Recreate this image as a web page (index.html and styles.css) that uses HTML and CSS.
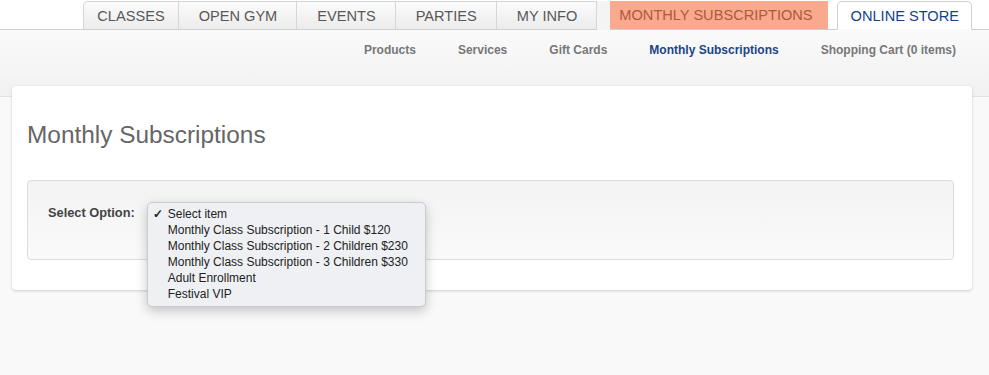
FILE: index.html
```html
<!DOCTYPE html>
<html>
<head>
<meta charset="utf-8">
<link rel="stylesheet" href="styles.css">
</head>
<body>
<header class="header">
  <nav class="tabs">
    <a class="tab tab-first">CLASSES</a>
    <a class="tab">OPEN GYM</a>
    <a class="tab">EVENTS</a>
    <a class="tab">PARTIES</a>
    <a class="tab tab-last">MY INFO</a>
    <a class="tab tab-promo">MONTHLY SUBSCRIPTIONS</a>
    <a class="tab tab-active">ONLINE STORE</a>
  </nav>
  <nav class="subnav">
    <a class="subnav-item">Products</a>
    <a class="subnav-item">Services</a>
    <a class="subnav-item">Gift Cards</a>
    <a class="subnav-item subnav-active">Monthly Subscriptions</a>
    <a class="subnav-item">Shopping Cart (0 items)</a>
  </nav>
</header>
<main class="main">
  <section class="card">
    <h1 class="title">Monthly Subscriptions</h1>
    <div class="well">
      <label class="label">Select Option:</label>
      <div class="select">
        <ul class="menu">
          <li class="menu-item"><span class="check">✓</span>Select item</li>
          <li class="menu-item">Monthly Class Subscription - 1 Child $120</li>
          <li class="menu-item">Monthly Class Subscription - 2 Children $230</li>
          <li class="menu-item">Monthly Class Subscription - 3 Children $330</li>
          <li class="menu-item">Adult Enrollment</li>
          <li class="menu-item">Festival VIP</li>
        </ul>
      </div>
    </div>
  </section>
</main>
</body>
</html>
```

FILE: styles.css
```css
* { box-sizing: border-box; }
html, body { margin: 0; padding: 0; }
body {
  background: #f9f9f9;
  font-family: "Liberation Sans", Arial, Helvetica, sans-serif;
  width: 989px;
  height: 375px;
  overflow: hidden;
}
.header {
  height: 97px;
  background: linear-gradient(#fafafa 30px, #f1f1f1 96px);
  border-bottom: 1px solid #e2e2e2;
}
.tabs {
  display: flex;
  justify-content: flex-end;
  align-items: flex-end;
  height: 30px;
  padding: 1px 17px 0 0;
  background: #fff;
  border-bottom: 1px solid #cfcfcf;
}
.tab {
  display: flex;
  align-items: center;
  height: 29px;
  margin-bottom: -1px;
  padding: 0 19px 0 20px;
  font-size: 14.6px;
  color: #585858;
  background: linear-gradient(#fbfbfb, #ececec);
  border: 1px solid #d6d6d6;
  border-left: none;
  border-bottom: 1px solid #cfcfcf;
}
.tab-first {
  padding: 0 13px 0 13px;
  border-left: 1px solid #d6d6d6;
  border-top-left-radius: 5px;
}
.tab-last {
  border-right: 1px solid #d6d6d6;
  box-shadow: 13px 0 0 #f4f4f4;
  margin-right: 13px;
}
.tab-promo {
  background: #f9a98e;
  border: none;
  color: #b0583e;
  padding: 0 15px 0 9px;
  height: 29px;
  border-bottom: 1px solid #cfcfcf;
}
.tab-active {
  margin-left: 9px;
  background: #fff;
  color: #12438a;
  border: 1px solid #d0d0d0;
  border-bottom: 1px solid #fafafa;
  border-radius: 5px 5px 0 0;
  padding: 0 12px 0 13px;
}
.subnav {
  display: flex;
  justify-content: flex-end;
  gap: 42px;
  padding: 13px 33px 0 0;
}
.subnav-item {
  font-size: 12px;
  font-weight: bold;
  color: #777;
}
.subnav-active { color: #1b4586; }
.main {
  margin-top: -11px;
  padding: 0 17px 0 12px;
}
.card {
  background: #fff;
  border-radius: 4px;
  box-shadow: 0 1px 3px rgba(0,0,0,0.18);
  height: 204px;
  padding: 35px 18px 0 15px;
}
.title {
  margin: 0 0 31px 0;
  font-size: 24.4px;
  font-weight: normal;
  color: #666;
  line-height: 28px;
}
.well {
  display: flex;
  align-items: flex-start;
  height: 80px;
  border: 1px solid #dcdcdc;
  border-radius: 4px;
  background: linear-gradient(#f3f3f3, #fafafa);
  padding: 24px 20px 0 20px;
}
.label {
  font-size: 12.8px;
  font-weight: bold;
  color: #444;
  line-height: 15px;
  margin-right: 12px;
}
.select {
  position: relative;
  width: 279px;
  height: 15px;
}
.menu {
  position: absolute;
  left: 0;
  top: -3px;
  width: 279px;
  margin: 0;
  padding: 3px 0 4px 0;
  list-style: none;
  background: #eef0f3;
  border: 1px solid #c9cbcf;
  border-radius: 5px;
  box-shadow: 0 4px 12px rgba(0,0,0,0.22);
}
.menu-item {
  position: relative;
  font-size: 12px;
  line-height: 16px;
  color: #222;
  padding-left: 20px;
  white-space: nowrap;
}
.check {
  position: absolute;
  left: 5px;
  top: 0;
  font-size: 12px;
  font-weight: bold;
}
```
